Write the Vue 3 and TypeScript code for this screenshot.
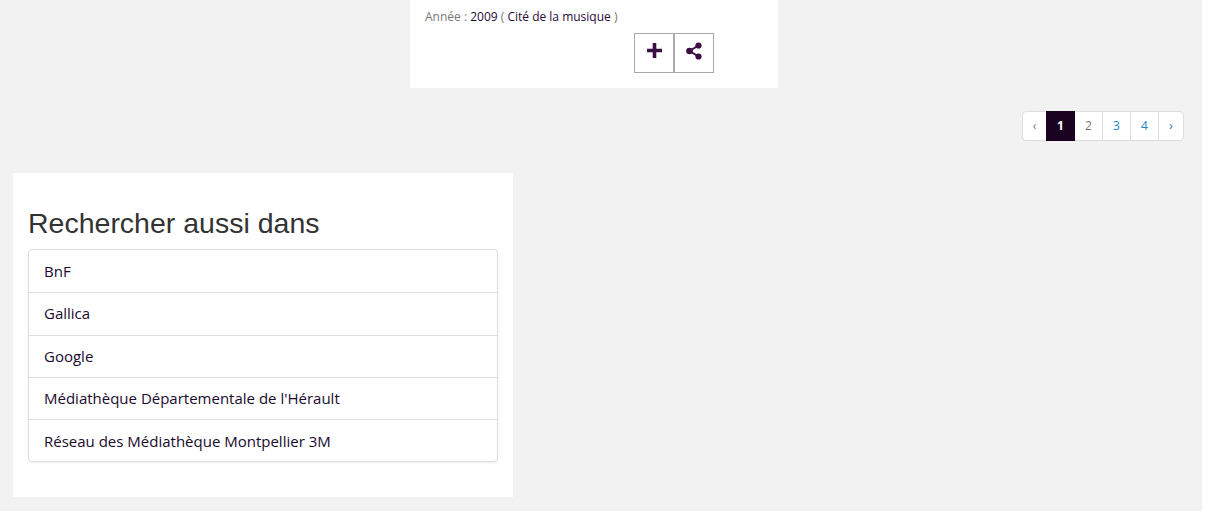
<template>
  <div class="page">
    <main class="content">
      <section class="notice">
        <p class="notice-meta">
          <span class="label">Année :</span> 2009 <span class="label">(</span> Cité de la musique <span class="label">)</span>
        </p>
        <div class="notice-actions">
          <button class="action" type="button" aria-label="Ajouter">
            <svg width="15" height="15" viewBox="0 0 15 15" fill="currentColor">
              <path d="M5.700 0h3.600v5.700H15v3.600H9.300V15H5.700V9.300H0V5.700h5.700z" />
            </svg>
          </button>
          <button class="action" type="button" aria-label="Partager">
            <svg width="16" height="18" viewBox="0 0 16 18" fill="none">
              <path d="M12.500 3.500 3.500 9l9 5.500" stroke="currentColor" stroke-width="2" />
              <circle cx="12.500" cy="3.500" r="3.100" fill="currentColor" />
              <circle cx="3.500" cy="9" r="3.300" fill="currentColor" />
              <circle cx="12.500" cy="14.500" r="3.100" fill="currentColor" />
            </svg>
          </button>
        </div>
      </section>

      <nav class="pagination" aria-label="Pages">
        <a class="page-link muted">‹</a>
        <a
          v-for="page in pages"
          :key="page"
          class="page-link"
          :class="{ active: page === 1, muted: page === 2 }"
        >{{ page }}</a>
        <a class="page-link">›</a>
      </nav>

      <aside class="search-card">
        <h3>Rechercher aussi dans</h3>
        <ul class="search-list">
          <li v-for="source in sources" :key="source">{{ source }}</li>
        </ul>
      </aside>
    </main>
  </div>
</template>

<script setup lang="ts">
const pages: number[] = [1, 2, 3, 4];

const sources: string[] = [
  "BnF",
  "Gallica",
  "Google",
  "Médiathèque Départementale de l'Hérault",
  "Réseau des Médiathèque Montpellier 3M",
];
</script>

<style>
html,
body {
  background: #fff;
}
</style>

<style scoped>
.page {
  height: 511px;
  overflow: hidden;
  font-family: "Open Sans", "Liberation Sans", sans-serif;
  color: #1a0a2e;
}

.content {
  width: 1202px;
  height: 511px;
  box-sizing: border-box;
  background-color: #f2f2f2;
  display: flex;
  flex-direction: column;
}

.notice {
  width: 368px;
  height: 88px;
  margin-left: 410px;
  box-sizing: border-box;
  padding: 8px 15px 0;
  background-color: #fff;
}

.notice-meta {
  margin: 0;
  font-size: 12px;
  line-height: 17px;
  color: #2a0a3a;
}

.label {
  color: #777;
}

.notice-actions {
  display: flex;
  margin: 8px 0 0 209px;
}

.action {
  width: 40px;
  height: 40px;
  padding: 0 0 5px;
  display: flex;
  align-items: center;
  justify-content: center;
  background-color: #fff;
  border: 1px solid #aaa;
  color: #3b0f45;
}

.pagination {
  display: flex;
  align-self: flex-end;
  height: 30px;
  margin: 23px 18px 0 0;
  box-sizing: border-box;
  background-color: #fff;
  border: 1px solid #ddd;
  border-radius: 4px;
  font-size: 12px;
}

.page-link {
  min-width: 27px;
  padding-bottom: 1px;
  box-sizing: content-box;
  display: flex;
  align-items: center;
  justify-content: center;
  border-left: 1px solid #ddd;
  color: #2a7fc0;
}

.page-link:first-child {
  border-left: none;
  min-width: 23px;
}

.page-link:last-child {
  min-width: 24px;
  padding-bottom: 2px;
  font-size: 13px;
}

.page-link.muted {
  color: #777;
}

.page-link.active {
  min-width: 29px;
  margin: -1px 0;
  border-left: none;
  background-color: #1a0220;
  color: #fff;
  font-weight: 700;
}

.page-link.active + .page-link {
  border-left: none;
}

.search-card {
  width: 500px;
  height: 324px;
  margin: 32px 0 0 13px;
  box-sizing: border-box;
  padding: 34px 15px 0;
  background-color: #fff;
}

.search-card h3 {
  margin: 0 0 10px;
  font-family: "Liberation Sans", Arial, sans-serif;
  font-size: 28.500px;
  font-weight: 400;
  line-height: 32px;
  color: #333;
}

.search-list {
  margin: 0;
  padding: 0;
  list-style: none;
  border: 1px solid #ddd;
  border-radius: 4px;
  box-shadow: 0 1px 2px rgba(0, 0, 0, 0.08);
  font-size: 15px;
}

.search-list li {
  height: 42.250px;
  box-sizing: border-box;
  padding: 0 15px 1px;
  display: flex;
  align-items: center;
  border-top: 1px solid #ddd;
  color: #1a0a2e;
}

.search-list li:first-child,
.search-list li:last-child {
  padding-bottom: 0;
}

.search-list li:first-child {
  border-top: none;
}
</style>
